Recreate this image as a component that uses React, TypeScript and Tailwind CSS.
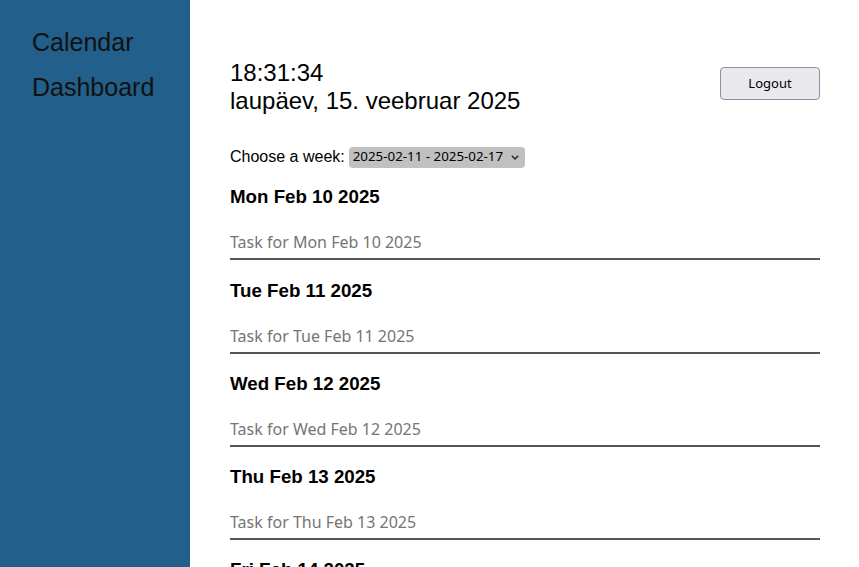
import React, { useState } from 'react';

const days = [
  'Mon Feb 10 2025',
  'Tue Feb 11 2025',
  'Wed Feb 12 2025',
  'Thu Feb 13 2025',
  'Fri Feb 14 2025',
  'Sat Feb 15 2025',
  'Sun Feb 16 2025',
];

const weeks = ['2025-02-04 - 2025-02-10', '2025-02-11 - 2025-02-17', '2025-02-18 - 2025-02-24'];

const App = () => {
  const [week, setWeek] = useState(weeks[1]);
  const [tasks, setTasks] = useState<Record<string, string>>({});

  return (
    <div className="flex min-h-screen bg-white font-['Liberation_Sans',Arial,sans-serif]">
      <aside className="w-[190px] shrink-0 bg-[#225f8a] pl-8 pt-[28px]">
        <nav className="flex flex-col gap-[17px] text-[25px] leading-[28px] text-[#111]">
          <a href="#">Calendar</a>
          <a href="#">Dashboard</a>
        </nav>
      </aside>

      <main className="flex-1 pl-10 pr-[39px] pt-[59px] text-black">
        <div className="flex items-start justify-between">
          <div className="text-[24px] leading-[28px]">
            <div>18:31:34</div>
            <div>laupäev, 15. veebruar 2025</div>
          </div>
          <button className="mt-[8px] h-[33px] w-[100px] rounded-[4px] border border-[#8f8f9d] bg-[#e9e9ed] font-['Noto_Sans',sans-serif] text-[13px] text-black">
            Logout
          </button>
        </div>

        <div className="mt-[30px] flex items-center gap-1 text-[16px]">
          <label htmlFor="week">Choose a week:</label>
          <div className="flex h-[21px] w-[176px] items-center rounded-[4px] bg-[#c0c0c0]">
            <select
              id="week"
              value={week}
              onChange={(e) => setWeek(e.target.value)}
              className="h-full flex-1 appearance-none bg-transparent pl-[4px] font-['Noto_Sans',sans-serif] text-[13.33px] text-black outline-none"
            >
              {weeks.map((w) => (
                <option key={w} value={w}>
                  {w}
                </option>
              ))}
            </select>
            <svg width="8" height="5" viewBox="0 0 8 5" className="mr-[6px]" fill="none">
              <path d="M0.8 0.8 L4 4 L7.2 0.8" stroke="#222" strokeWidth="1.4" />
            </svg>
          </div>
        </div>

        <div className="flex flex-col">
          {days.map((day) => (
            <div key={day} className="flex flex-col">
              <h3 className="mb-[18px] mt-[17.3px] text-[18.72px] font-bold leading-[22px]">{day}</h3>
              <input
                type="text"
                value={tasks[day] || ''}
                onChange={(e) => setTasks({ ...tasks, [day]: e.target.value })}
                placeholder={`Task for ${day}`}
                className="mb-[2px] block h-[34px] w-full border-b-2 border-[#555] font-['Noto_Sans',sans-serif] text-[16px] outline-none placeholder:text-[#757575]"
              />
            </div>
          ))}
        </div>
      </main>
    </div>
  );
};

export default App;
